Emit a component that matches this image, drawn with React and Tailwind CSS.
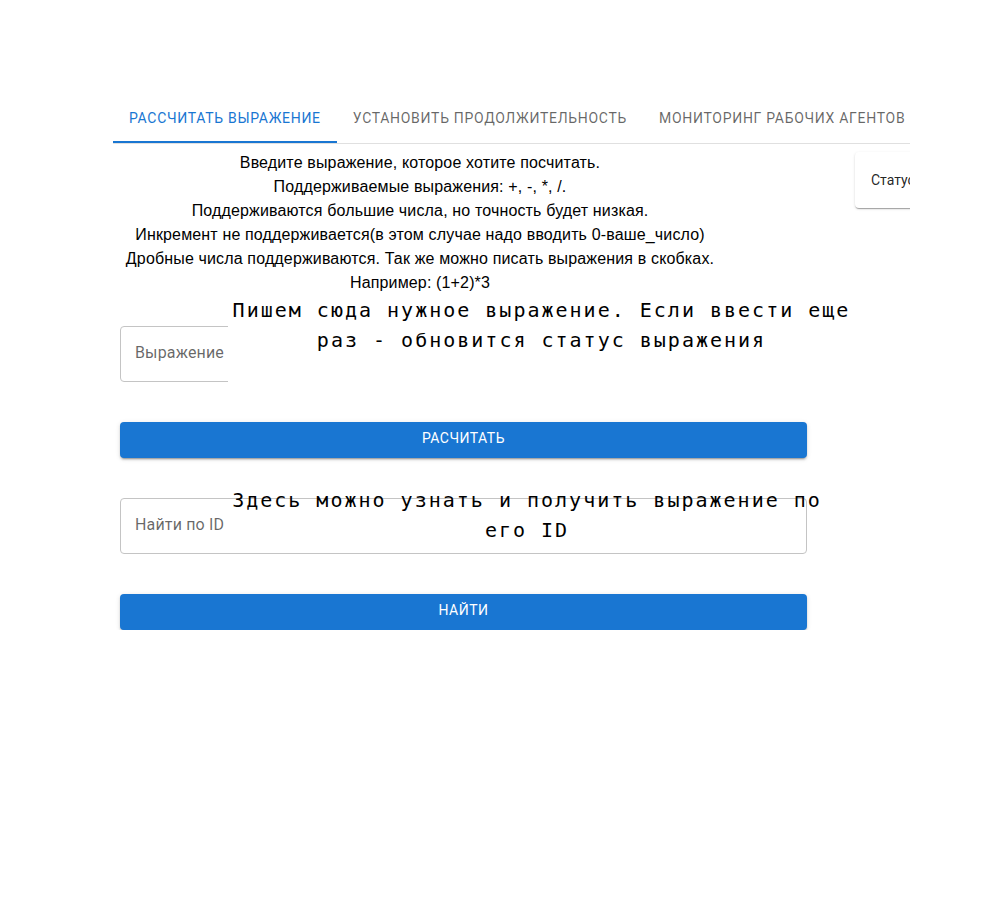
import React from "react";

const tabs = [
  "Рассчитать выражение",
  "Установить продолжительность",
  "Мониторинг рабочих агентов",
];

const hints = [
  "Введите выражение, которое хотите посчитать.",
  "Поддерживаемые выражения: +, -, *, /.",
  "Поддерживаются большие числа, но точность будет низкая.",
  "Инкремент не поддерживается(в этом случае надо вводить 0-ваше_число)",
  "Дробные числа поддерживаются. Так же можно писать выражения в скобках.",
  "Например: (1+2)*3",
];

const Field = ({ label }) => (
  <div className="ml-[7px] w-[687px] h-[56px] rounded-[4px] border border-[#c4c4c4] flex items-center px-[14px] pb-[3px]">
    <span className="text-[16px] text-[rgba(0,0,0,0.6)] font-['Roboto'] tracking-[0.15px]">{label}</span>
  </div>
);

const Btn = ({ children }) => (
  <button className="ml-[7px] w-[687px] h-[36px] pb-[3px] rounded-[4px] bg-[#1976d2] text-white text-[14px] font-normal uppercase tracking-[0.5px] font-['Roboto'] shadow-[0_3px_1px_-2px_rgba(0,0,0,0.2),0_2px_2px_0_rgba(0,0,0,0.14),0_1px_5px_0_rgba(0,0,0,0.12)]">
    {children}
  </button>
);

export default function App() {
  return (
    <div className="relative w-[1004px] h-[903px] bg-white font-['Liberation_Sans',sans-serif]">
      <div className="pt-[94px] pl-[113px]">
        <div className="w-[797px] overflow-hidden">
          {/* Tabs */}
          <div className="flex border-b border-[#e0e0e0] h-[50px] font-['Roboto']">
            {tabs.map((t, i) => (
              <div
                key={t}
                className={
                  "relative px-[16px] flex items-center whitespace-nowrap uppercase text-[14px] font-normal tracking-[0.7px] " +
                  (i === 0 ? "text-[#1976d2]" : "text-[rgba(0,0,0,0.6)]")
                }
              >
                {t}
                {i === 0 && <span className="absolute left-0 right-0 bottom-0 h-[2px] bg-[#1976d2]" />}
              </div>
            ))}
          </div>

          <div className="flex">
            <div className="w-[742px] shrink-0">
              <div className="ml-[7px] w-[600px] mt-[7px] text-center text-[16px] leading-[24px] tracking-[0.15px] text-black">
                {hints.map((h) => (
                  <p key={h}>{h}</p>
                ))}
              </div>
              <div className="mt-[31px]">
                <Field label="Выражение" />
              </div>
              <div className="mt-[40px]">
                <Btn>Расчитать</Btn>
              </div>
              <div className="mt-[40px]">
                <Field label="Найти по ID" />
              </div>
              <div className="mt-[40px]">
                <Btn>Найти</Btn>
              </div>
            </div>

            <div className="mt-[8px] h-[56px] w-[160px] shrink-0 rounded-[4px] bg-white shadow-[0_2px_1px_-1px_rgba(0,0,0,0.2),0_1px_1px_0_rgba(0,0,0,0.14),0_1px_3px_0_rgba(0,0,0,0.12)] flex items-center px-[16px]">
              <span className="text-[14px] text-[rgba(0,0,0,0.87)] font-['Roboto']">Статус</span>
            </div>
          </div>
        </div>
      </div>

      {/* annotations */}
      <div className="absolute left-[228px] top-[293px] w-[627px] h-[92px] bg-white pt-[2px] text-center font-['DejaVu_Sans_Mono',monospace] text-[20px] leading-[30px] tracking-[2px] text-black">
        Пишем сюда нужное выражение. Если ввести еще раз - обновится статус выражения
      </div>
      <div className="absolute left-[227px] top-[485px] w-[600px] text-center font-['DejaVu_Sans_Mono',monospace] text-[20px] leading-[30px] tracking-[2px] text-black">
        Здесь можно узнать и получить выражение по его ID
      </div>
    </div>
  );
}
